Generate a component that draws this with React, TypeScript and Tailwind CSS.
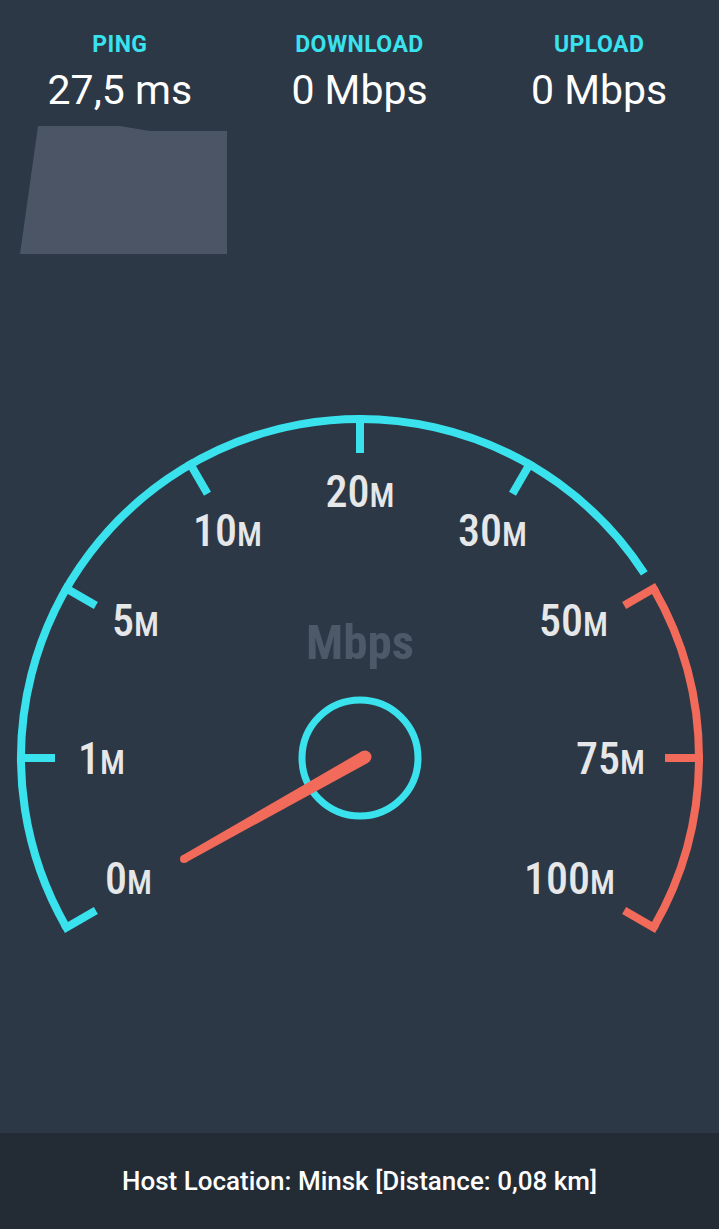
import React from "react";

const CX = 360;
const CY = 760;
const R = 339;

const pt = (deg: number, r: number) => {
  const a = (deg * Math.PI) / 180;
  return { x: CX + r * Math.cos(a), y: CY - r * Math.sin(a) };
};

const arc = (from: number, to: number) => {
  const s = pt(from, R);
  const e = pt(to, R);
  const large = from - to > 180 ? 1 : 0;
  return `M ${s.x} ${s.y} A ${R} ${R} 0 ${large} 1 ${e.x} ${e.y}`;
};

interface Tick {
  deg: number;
  color: string;
}

const ticks: Tick[] = [
  { deg: 210, color: "#3ae2ee" },
  { deg: 180, color: "#3ae2ee" },
  { deg: 150, color: "#3ae2ee" },
  { deg: 120, color: "#3ae2ee" },
  { deg: 90, color: "#3ae2ee" },
  { deg: 60, color: "#3ae2ee" },
  { deg: 30, color: "#f26a5a" },
  { deg: 0, color: "#f26a5a" },
  { deg: -30, color: "#f26a5a" },
];

interface Label {
  num: string;
  x: number;
  y: number;
  anchor: "start" | "middle" | "end";
}

const labels: Label[] = [
  { num: "0", x: 105, y: 896, anchor: "start" },
  { num: "1", x: 78, y: 776, anchor: "start" },
  { num: "5", x: 112, y: 638, anchor: "start" },
  { num: "10", x: 193, y: 548, anchor: "start" },
  { num: "20", x: 360, y: 509, anchor: "middle" },
  { num: "30", x: 527, y: 548, anchor: "end" },
  { num: "50", x: 608, y: 638, anchor: "end" },
  { num: "75", x: 645, y: 776, anchor: "end" },
  { num: "100", x: 615, y: 896, anchor: "end" },
];

const gaugeFont = '"Roboto Condensed", "DejaVu Sans Condensed", "Liberation Sans Narrow", Roboto, sans-serif';

// needle: tapered bar, thin at the tip, wider at the hub
const needle = "185.96,864.48 182.04,857.52 361.81,753.34 368.19,764.66";

const Gauge = () => (
  <svg width="719" height="560" viewBox="0 400 719 560" className="block">
    <path d={arc(210, 33)} fill="none" stroke="#3ae2ee" strokeWidth="8" />
    <path d={arc(30, -30)} fill="none" stroke="#f26a5a" strokeWidth="8" />
    {ticks.map((t) => {
      const a = pt(t.deg, R + 4);
      const b = pt(t.deg, R - 34);
      return (
        <line
          key={t.deg}
          x1={a.x}
          y1={a.y}
          x2={b.x}
          y2={b.y}
          stroke={t.color}
          strokeWidth="8"
        />
      );
    })}
    {labels.map((l) => (
      <text
        key={l.num}
        x={l.x}
        y={l.y}
        textAnchor={l.anchor}
        fill="#e6e7e9"
        fontFamily={gaugeFont}
        fontSize="44"
        fontWeight="500"
        style={{ fontStretch: "condensed" }}
      >
        {l.num}
        <tspan fontSize="33">M</tspan>
      </text>
    ))}
    <text
      x={CX}
      y={661}
      textAnchor="middle"
      fill="#4d5968"
      fontFamily={gaugeFont}
      fontSize="49"
      fontWeight="700"
      style={{ fontStretch: "condensed" }}
    >
      Mbps
    </text>
    <circle cx={CX} cy={CY} r="58" fill="none" stroke="#3ae2ee" strokeWidth="7" />
    <polygon points={needle} fill="#f26a5a" />
    <circle cx="184" cy="861" r="4" fill="#f26a5a" />
    <circle cx="365" cy="759" r="6.5" fill="#f26a5a" />
  </svg>
);

const Stat = ({ label, value }: { label: string; value: string }) => (
  <div className="flex flex-col items-center">
    <div className="text-[23px] leading-[28px] font-bold text-[#3ae2ee] tracking-[0.02em]">
      {label}
    </div>
    <div className="mt-[8px] text-[41px] leading-[46px] text-white">
      {value}
    </div>
  </div>
);

export default function App() {
  return (
    <div
      className="flex flex-col h-[1229px] w-[719px] bg-[#2c3845] overflow-hidden"
      style={{ fontFamily: 'Roboto, "Noto Sans", sans-serif' }}
    >
      <div className="grid grid-cols-3 pt-[31px]">
        <Stat label="PING" value="27,5 ms" />
        <Stat label="DOWNLOAD" value="0 Mbps" />
        <Stat label="UPLOAD" value="0 Mbps" />
      </div>

      <div className="mt-[11px] px-[20px]">
        <svg width="207" height="130" viewBox="20 124 207 130" className="block">
          <polygon
            points="20,254 38,126 120,126 150,131 227,131 227,254"
            fill="#4b5565"
          />
        </svg>
      </div>

      <div className="mt-[144px]">
        <Gauge />
      </div>

      <div className="flex-1" />

      <div className="h-[96px] bg-[#232b35] flex items-center justify-center">
        <span className="text-[26px] text-white font-medium">
          Host Location: Minsk [Distance: 0,08 km]
        </span>
      </div>
    </div>
  );
}
